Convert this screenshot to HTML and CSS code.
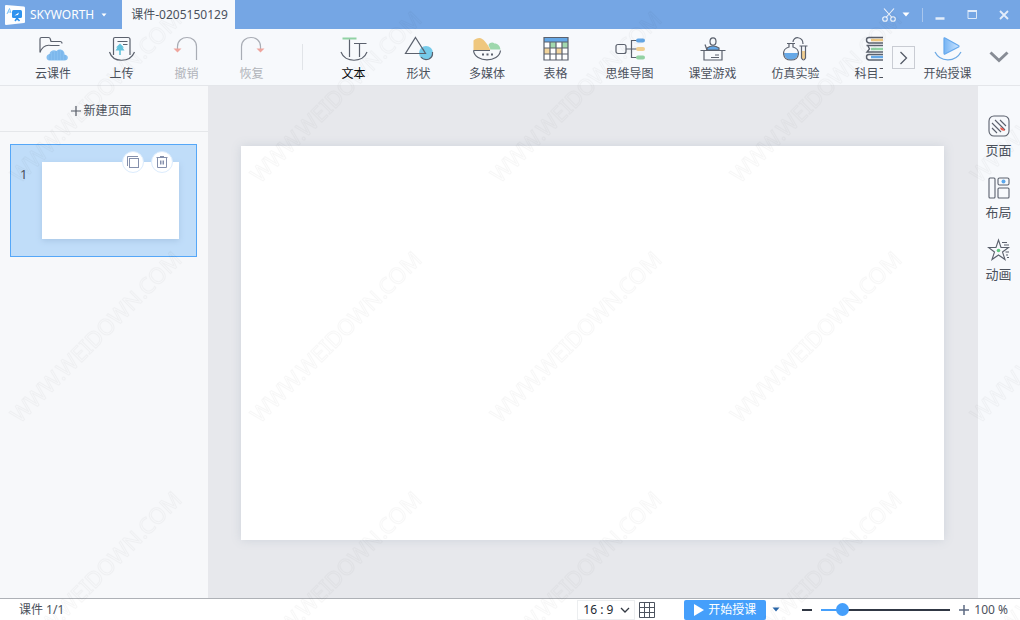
FILE: index.html
```html
<!DOCTYPE html>
<html lang="zh-CN">
<head>
<meta charset="utf-8">
<meta name="viewport" content="width=device-width, initial-scale=1">
<title>课件-0205150129</title>
<link rel="stylesheet" href="styles.css">
</head>
<body>
<div class="app">
  <header class="titlebar">
    <button class="brand" type="button">
      <svg width="20" height="20" viewBox="0 0 20 20"><path d="M1 0L19 1.500Q20 1.600 20 3V17Q20 18 19 18L1 20Q0 20 0 19V1Q0 0 1 0Z" fill="#fdfeff"/><path d="M2 9L4.500 3.500L6 8M3 7H6" fill="none" stroke="#7dc3fa" stroke-width="1"/><rect x="7" y="5" width="10" height="8" rx="1.500" fill="#2f93ee"/><path d="M9.500 10.500L14 7M10 16L12 13L14.500 16M11 14.500H13.500" fill="none" stroke="#2f93ee" stroke-width="1.500"/><path d="M9.500 10.500L14 7.500L13 10Z" fill="#fff"/></svg>
      <span>SKYWORTH</span>
      <svg width="6" height="4" viewBox="0 0 6 4"><path d="M0.500 0.500H5.500L3 3.500Z" fill="#fff"/></svg>
    </button>
    <div class="tab">课件-0205150129</div>
    <div class="window-tools">
      <button class="cut" type="button" aria-label="截图">
        <svg width="14" height="14" viewBox="0 0 14 14" fill="none" stroke="#f1f6fd" stroke-width="1.100"><path d="M2 0.500L10 9.500M12 0.500L4 9.500"/><circle cx="3" cy="11" r="2.300"/><circle cx="11" cy="11" r="2.300"/></svg>
        <svg width="8" height="5" viewBox="0 0 8 5"><path d="M0.500 0.500H7.500L4 4.500Z" fill="#fff"/></svg>
      </button>
      <span class="tool-line"></span>
      <button class="win" type="button" aria-label="最小化"><svg width="12" height="12" viewBox="0 0 12 12"><path d="M1.500 9.500H10.500" stroke="#e3edfa" stroke-width="2.500"/></svg></button>
      <button class="win" type="button" aria-label="最大化"><svg width="12" height="12" viewBox="0 0 12 12"><path d="M2 3V9.500H10.500V3" fill="none" stroke="#dbe8f8" stroke-width="1"/><path d="M1.500 2H11" stroke="#e3edfa" stroke-width="2"/></svg></button>
      <button class="win" type="button" aria-label="关闭"><svg width="12" height="12" viewBox="0 0 12 12"><path d="M2 2L10 10M10 2L2 10" stroke="#e3edfa" stroke-width="1.800"/></svg></button>
    </div>
  </header>

  <nav class="toolbar">
    <div class="tools">
      <button class="tool three" type="button">
        <svg class="icon" viewBox="0 0 32 28"><path d="M3 17.500V4Q3 2.500 4.500 2.500H11.500Q13 2.500 13.300 4L14 6.500H23Q25 6.500 25 8.500M3 17.500C5 12 9 9.500 14 10.500H22.500"/><path class="nl" d="M12.500 25.500C8.500 25.500 8.500 19.500 12.500 19C13 15.500 17 14.500 19.500 16C23 12.500 28 15.500 27.500 19.500C32 20 32 25.500 27.500 25.500Z" fill="#86bff0"/><path d="M13 19V25M16 17V25M19 16V25M22 15V25M25 16V25M28 20V25" stroke="#68a9e6" stroke-width="0.600"/></svg>
        <span>云课件</span>
      </button>
      <button class="tool" type="button">
        <svg class="icon" viewBox="0 0 32 28"><path d="M7.500 20V4Q7.500 2.500 9 2.500H22Q24 2.500 24 4.500V20M11.500 6.500H21.500M17 9.500H21.500M3.500 17C7 28 24 28 28.500 17"/><path d="M14 20V12" stroke="#59bfd8" stroke-width="1.500"/><path class="nl" d="M14 8.500L18 12.500H16.500L18.500 15.500H9.500L11.500 12.500H10Z" fill="#63c2dc"/></svg>
        <span>上传</span>
      </button>
      <button class="tool" type="button" disabled>
        <svg class="icon muted" viewBox="0 0 32 28"><path d="M6.500 14V11.500C6.500 -0.500 25.500 -0.500 25.500 11.500V25"/><path class="nl" d="M2.500 13.500H10.500L6.500 17.500Z" fill="#efa59d"/></svg>
        <span>撤销</span>
      </button>
      <button class="tool" type="button" disabled>
        <svg class="icon muted" viewBox="0 0 32 28"><path d="M5.500 25V11.500C5.500 -0.500 24.500 -0.500 24.500 11.500V14"/><path class="nl" d="M20.500 13.500H28.500L24.500 17.500Z" fill="#efa59d"/></svg>
        <span>恢复</span>
      </button>
      <span class="divider"></span>
      <button class="tool active" type="button">
        <svg class="icon" viewBox="0 0 32 28"><path d="M4.500 3.500H18.500" stroke="#91d2a4" stroke-width="2"/><path d="M11.500 4.500V22M16 8.500H28.500M21.500 8.500V22M3 17C7 28 25 28 29 17"/></svg>
        <span>文本</span>
      </button>
      <button class="tool" type="button">
        <svg class="icon" viewBox="0 0 32 28"><circle class="nl" cx="23" cy="18" r="7" fill="#76cbea"/><path d="M12.500 2.500L22.500 18.500H2.500ZM22.500 18.500L20 14M18 22Q21 26 26 24Q30 22 29.500 17"/></svg>
        <span>形状</span>
      </button>
      <button class="tool three" type="button">
        <svg class="icon" viewBox="0 0 32 28"><path class="nl" d="M2.500 15V5.500C4 4 6 3 8.500 3C12 3 16 8 19.500 15Z" fill="#efc77e"/><path class="nl" d="M19.500 14.500L17.500 10C19 7 22 7 23.500 8.500C27 8.500 29 11 29.500 14.500Z" fill="#9ed8ad"/><path d="M2.500 15.500H19M29.500 15.500C28 28 4 28 2.500 15.500"/><path d="M11 19.500H22" stroke-width="2" stroke-dasharray="2 2.500"/></svg>
        <span>多媒体</span>
      </button>
      <button class="tool" type="button">
        <svg class="icon" viewBox="0 0 32 28"><path class="nl" d="M4 2.500H28V25H4Z" fill="#fff"/><path class="nl" d="M4 3H28V7H4Z" fill="#65a8e7"/><path class="nl" d="M10 7H16V13H10ZM22 7H28V13H22Z" fill="#a2d9af"/><path class="nl" d="M4 13H10V19H4ZM16 13H22V19H16Z" fill="#f3d59c"/><path d="M4 2.500H28V25H4ZM4 7H28M4 13H28M4 19H28M10 7V25M16 7V25M22 7V25"/></svg>
        <span>表格</span>
      </button>
      <button class="tool four" type="button">
        <svg class="icon" viewBox="0 0 32 28"><path d="M25 5.500H17.500V22.500H25M12 14H25"/><rect x="2" y="9.500" width="10" height="9" rx="2"/><path d="M24 5.500H29" stroke="#65a8e7" stroke-width="4" stroke-linecap="round"/><path d="M24 14H29" stroke="#f1cf91" stroke-width="4" stroke-linecap="round"/><path d="M24 22.500H29" stroke="#93d2a3" stroke-width="4" stroke-linecap="round"/></svg>
        <span>思维导图</span>
      </button>
      <button class="tool four" type="button">
        <svg class="icon" viewBox="0 0 32 28"><ellipse cx="16" cy="6.500" rx="3" ry="3.700"/><path d="M10 15V13Q16 9 22 13V15Z" fill="#65a8e7"/><path d="M3.500 15.500H28.500M7 16V25H25V16M10 15L8 9.500M18 20H22M14 22.500H22"/></svg>
        <span>课堂游戏</span>
      </button>
      <button class="tool four" type="button">
        <svg class="icon" viewBox="0 0 32 28"><path class="nl" d="M4 18H18C18 27 4 27 4 18Z" fill="#65a8e7"/><path class="nl" d="M22 16H25V24H22Z" fill="#f1cf91"/><path d="M7 8.500H15M9 9V12C1 14 2 25 11 25C20 25 21 14 13 12V9M13 7C13 1 23 1 23 9M19.500 11H27.500M21.500 11V23Q23.500 27 25.500 23V11"/></svg>
        <span>仿真实验</span>
      </button>
      <button class="tool four" type="button">
        <svg class="icon" viewBox="0 0 32 28"><path d="M8 5H30" stroke="#efc77e" stroke-width="2.500"/><path d="M8 14H30" stroke="#91d2a4" stroke-width="2.500"/><path d="M8 22H30" stroke="#65a8e7" stroke-width="2.500"/><path d="M30 2.500H6Q3.500 2.500 3.500 5T6 8H30M3.500 10.500H30M5 11L6.500 14L4 17H30M30 19.500H6Q3.500 19.500 3.500 22T6 25H30" stroke-width="1.400"/></svg>
        <span>科目工具</span>
      </button>
    </div>
    <button class="next" type="button" aria-label="更多工具"><svg width="21" height="21" viewBox="0 0 21 21"><path d="M7.500 5L13.500 11L7.500 17" fill="none" stroke="#545a66" stroke-width="1.300"/></svg></button>
    <button class="tool start" type="button">
      <svg class="icon" viewBox="0 0 32 28"><defs><linearGradient id="play" x2="1" y2="0"><stop offset="0" stop-color="#76b4f4"/><stop offset="1" stop-color="#cce5ff"/></linearGradient></defs><path d="M12 3.500Q12 2.500 13 3L26.500 10.500Q27.500 11 26.500 12L13 19Q12 19.500 12 18Z" fill="url(#play)" stroke="#67a9ed"/><path d="M3 17C8 27 23 28 29 17" stroke="#6ca9e4"/></svg>
      <span>开始授课</span>
    </button>
    <button class="collapse" type="button" aria-label="收起工具栏"><svg width="20" height="14" viewBox="0 0 20 14"><path d="M1.500 2.500L10 10.500L18.500 2.500" fill="none" stroke="#878c95" stroke-width="3"/></svg></button>
  </nav>

  <div class="workspace">
    <aside class="pages">
      <button class="new-page" type="button"><svg width="10" height="10" viewBox="0 0 10 10"><path d="M5 0V10M0 5H10" stroke="#555b66" stroke-width="1.200"/></svg><span>新建页面</span></button>
      <div class="page-card">
        <span class="page-number">1</span>
        <div class="thumb"></div>
        <div class="page-actions">
          <button type="button" aria-label="复制页面"><svg width="14" height="14" viewBox="0 0 14 14" fill="none" stroke="#8590ac"><path d="M1.500 11V1.500H12"/><rect x="3.500" y="3.500" width="9" height="9"/></svg></button>
          <button type="button" aria-label="删除页面"><svg width="14" height="14" viewBox="0 0 14 14" fill="none" stroke="#8590ac"><path d="M1.500 2.500H12.500M5 1.500H9M2.500 3V12.500H11.500V3M5.500 5.500V9.500M7 5.500V9.500M8.500 5.500V9.500"/></svg></button>
        </div>
      </div>
    </aside>
    <main class="stage"><div class="slide"></div></main>
    <aside class="inspector">
      <button type="button">
        <svg width="24" height="24" viewBox="0 0 24 24"><rect x="2" y="2" width="20" height="20" rx="5"/><path d="M5 9L14 18M5 14L10 19M8 6L18 16M13 6L19 12"/><path class="nl" d="M13 13.500Q16 13 18 16.500Q14 17.500 13 13.500Z" fill="#f15d4f"/></svg>
        <span>页面</span>
      </button>
      <button type="button">
        <svg width="24" height="24" viewBox="0 0 24 24"><rect x="2" y="2" width="6" height="20" rx="1"/><rect x="11" y="2" width="11" height="7" rx="1.500"/><rect x="11" y="12" width="11" height="10" rx="1"/><circle class="nl" cx="16.500" cy="5.500" r="2" fill="#5ba7ec"/></svg>
        <span>布局</span>
      </button>
      <button type="button">
        <svg width="24" height="24" viewBox="0 0 24 24"><path d="M11.500 2L14 9.500H21.500L15.500 14L18 21.500L11.500 17L5 21.500L7.500 14L1.500 9.500H9ZM15 4.500H20M17 7H22M18.500 14H22M19 17H21M20 19.500H22"/><circle class="nl" cx="11.500" cy="12.500" r="1.800" fill="#62c982"/></svg>
        <span>动画</span>
      </button>
    </aside>
  </div>

  <footer class="statusbar">
    <span class="count">课件 1/1</span>
    <div class="status-tools">
      <div class="ratio">
        <select aria-label="画面比例"><option>16 : 9</option><option>4 : 3</option></select>
        <svg width="10" height="6" viewBox="0 0 10 6"><path d="M1 1L5 5L9 1" fill="none" stroke="#333943" stroke-width="1.300"/></svg>
      </div>
      <button class="grid-view" type="button" aria-label="网格视图"><svg width="18" height="18" viewBox="0 0 18 18"><path d="M1.500 1.500H16.500V16.500H1.500ZM6.500 1.500V16.500M11.500 1.500V16.500M1.500 6.500H16.500M1.500 11.500H16.500" fill="none" stroke="#4c535f"/></svg></button>
      <button class="present" type="button"><svg width="10" height="12" viewBox="0 0 10 12"><path d="M0 0L10 6L0 12Z" fill="#fff"/></svg><span>开始授课</span></button>
      <button class="present-menu" type="button" aria-label="授课选项"><svg width="8" height="5" viewBox="0 0 8 5"><path d="M0.500 0.500H7.500L4 4.500Z" fill="#2a67a9"/></svg></button>
      <div class="zoom">
        <button type="button" aria-label="缩小"><svg width="10" height="10" viewBox="0 0 10 10"><path d="M0 5H10" stroke="#303744" stroke-width="2"/></svg></button>
        <input type="range" min="0" max="800" value="100" aria-label="缩放">
        <button type="button" aria-label="放大"><svg width="10" height="10" viewBox="0 0 10 10"><path d="M0 5H10M5 0V10" stroke="#5c6981" stroke-width="1.500"/></svg></button>
        <output>100 %</output>
      </div>
    </div>
  </footer>

  <svg class="watermark" aria-hidden="true">
    <defs><pattern id="mark" width="240" height="240" patternUnits="userSpaceOnUse"><text class="mark-text" transform="translate(20 184) rotate(-45)">WWW.WEIDOWN.COM</text></pattern></defs>
    <rect width="100%" height="100%" fill="url(#mark)"/>
  </svg>
</div>
</body>
</html>
```
FILE: styles.css
```css
* { box-sizing: border-box; }

body {
  margin: 0;
  font: 12px/16px "Noto Sans", "Noto Sans CJK SC", sans-serif;
  color: #4b515c;
}

button, select {
  margin: 0;
  padding: 0;
  border: 0;
  background: none;
  font: inherit;
  color: inherit;
}

svg { display: block; flex: none; }

.app {
  position: relative;
  display: flex;
  flex-direction: column;
  min-height: 100vh;
  overflow: hidden;
}

/* Title bar */
.titlebar {
  display: flex;
  height: 29px;
  background: #75a6e4;
}

.brand {
  display: flex;
  align-items: center;
  gap: 5px;
  padding: 0 15px 0 5px;
  color: #fff;
}

.brand span { padding-right: 2px; }

.tab {
  display: flex;
  align-items: center;
  padding: 0 7px 0 9px;
  background: #f7f9fc;
}

.window-tools {
  display: flex;
  align-items: center;
  margin-left: auto;
  gap: 12px;
}

.cut { display: flex; align-items: center; gap: 6px; }
.tool-line { width: 1px; height: 14px; margin-right: -5px; background: #a8c6ed; }
.win { width: 20px; display: grid; place-items: center; }
.window-tools .win:last-child { margin-right: 6px; }

/* Toolbar */
.toolbar {
  display: flex;
  height: 57px;
  border-bottom: 1px solid #e4e6ea;
  background: #f7f9fc;
}

.tools {
  display: flex;
  flex: 1;
  min-width: 0;
  margin-right: 9px;
  padding-left: 17px;
  overflow: hidden;
}

.tool {
  display: flex;
  flex: none;
  flex-direction: column;
  align-items: center;
  gap: 3px;
  width: 65px;
  padding-top: 6px;
  white-space: nowrap;
}

.tool.three { width: 72px; }
.tool.four { width: 83px; }
.tool.start { width: 65px; }
.tool.active { color: #08090b; }
.tool:disabled { color: #b1b4ba; }

.icon {
  width: 32px;
  height: 28px;
  fill: none;
  stroke: #5b616d;
  stroke-width: 1.2;
}

.icon.muted { stroke: #a9adb5; }
.nl { stroke: none; }

.divider {
  flex: none;
  width: 1px;
  height: 26px;
  margin: 15px 18px;
  background: #e1e4e8;
}

.next {
  width: 23px;
  height: 23px;
  margin-top: 17px;
  border: 1px solid #c9ccd3;
}

.collapse {
  display: grid;
  place-items: center;
  width: 40px;
  padding-right: 2px;
}

/* Workspace */
.workspace {
  display: flex;
  flex: 1;
  background: #e7e8ec;
}

.pages {
  width: 208px;
  background: #f7f8fa;
}

.new-page {
  display: flex;
  align-items: center;
  justify-content: center;
  gap: 2px;
  width: 100%;
  height: 46px;
  padding: 4px 5px 0 0;
  border-bottom: 1px solid #e5e7ea;
}

.page-card {
  position: relative;
  display: flex;
  gap: 9px;
  margin: 12px 11px 0 10px;
  padding: 17px 17px 17px 9px;
  border: 1px solid #55a7f8;
  background: #c0ddf9;
}

.page-number {
  width: 13px;
  padding-top: 4px;
  font-size: 13px;
}

.thumb {
  flex: 1;
  aspect-ratio: 16 / 9;
  background: #fff;
  box-shadow: 0 2px 6px #a9c7e6;
}

.page-actions {
  position: absolute;
  top: 6px;
  right: 23px;
  display: flex;
  gap: 7px;
}

.page-actions button {
  display: grid;
  place-items: center;
  width: 22px;
  height: 22px;
  border: 1px solid #dcecfd;
  border-radius: 50%;
  background: #fff;
}

.stage {
  display: grid;
  flex: 1;
  align-items: center;
  padding: 2px 34px 0 33px;
}

.slide {
  aspect-ratio: 25 / 14;
  background: #fff;
  box-shadow: 0 0 10px #cdd2da;
}

.inspector {
  display: flex;
  flex-direction: column;
  gap: 18px;
  width: 42px;
  padding: 28px 1px 0 0;
  background: #f7f9fc;
  font-size: 13px;
}

.inspector button {
  display: flex;
  flex-direction: column;
  align-items: center;
  gap: 4px;
}

.inspector svg { fill: none; stroke: #5b616d; stroke-width: 1.1; }
.inspector .nl { stroke: none; }

/* Status bar */
.statusbar {
  display: flex;
  align-items: center;
  justify-content: space-between;
  height: 22px;
  padding: 0 12px 0 19px;
  border-top: 1px solid #aeb1b6;
  background: #fff;
}

.status-tools { display: flex; align-items: center; }

.ratio {
  display: grid;
  align-items: center;
  width: 58px;
  height: 20px;
  border: 1px solid #eceef0;
  color: #242932;
}

.ratio select {
  grid-area: 1 / 1;
  width: 100%;
  padding-left: 5px;
  appearance: none;
}

.ratio svg {
  grid-area: 1 / 1;
  justify-self: end;
  margin-right: 4px;
  pointer-events: none;
}

.grid-view { margin: 0 28px 0 3px; }

.present {
  display: flex;
  align-items: center;
  justify-content: center;
  gap: 4px;
  width: 82px;
  height: 20px;
  border-radius: 2px;
  background: #459ffb;
  color: #fff;
}

.present-menu { margin: 0 22px 0 6px; }

.zoom { display: flex; align-items: center; gap: 9px; }
.zoom output { margin-left: -4px; }

.zoom input {
  width: 129px;
  height: 14px;
  margin: 0;
  appearance: none;
  background: linear-gradient(90deg, #459ffb 16%, #303744 16%) center / 100% 2px no-repeat;
}

.zoom input::-webkit-slider-thumb {
  appearance: none;
  width: 13px;
  height: 13px;
  border-radius: 50%;
  background: #459ffb;
}

/* Watermark above every pane */
.watermark {
  position: absolute;
  inset: 0;
  width: 100%;
  height: 100%;
  pointer-events: none;
}

.mark-text {
  font: 22px "Noto Sans", sans-serif;
  fill: none;
  stroke: #000;
  stroke-opacity: 0.03;
  stroke-width: 1;
}
```
